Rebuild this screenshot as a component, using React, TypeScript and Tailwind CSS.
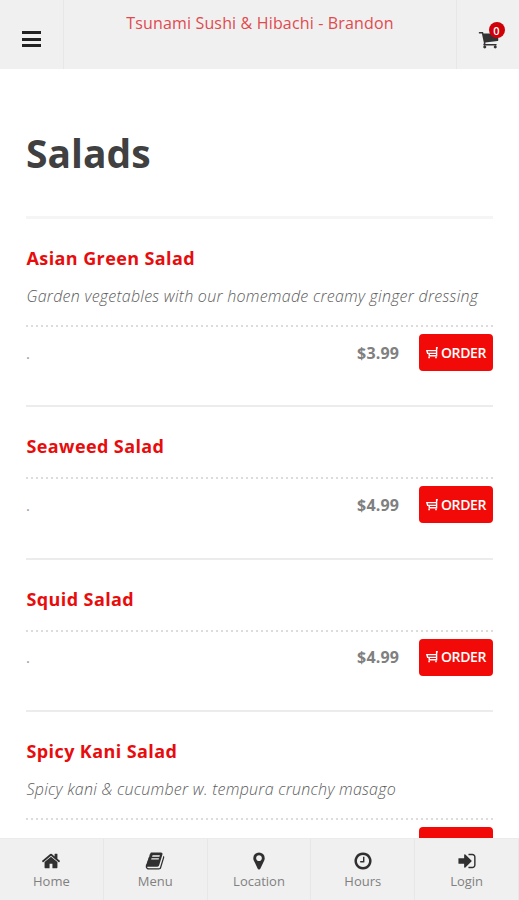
import React from "react";

const paths = {
  home: "M1472 992v480q0 26-19 45t-45 19h-384v-384h-256v384h-384q-26 0-45-19t-19-45v-480q0-1 .5-3t.5-3l575-474 575 474q1 2 1 6zm223-69l-62 74q-8 9-21 11h-3q-13 0-21-7l-692-577-692 577q-12 8-24 7-13-2-21-11l-62-74q-8-10-7-23.5t11-21.5l719-599q32-26 76-26t76 26l244 204v-195q0-14 9-23t23-9h192q14 0 23 9t9 23v408l219 182q10 8 11 21.5t-7 23.5z",
  book: "M1703 478q40 57 18 129l-275 906q-19 64-76.5 107.5t-122.5 43.5h-923q-77 0-148.5-53.5t-99.5-131.5q-24-67-2-127 0-4 3-27t4-37q1-8-3-21.5t-3-19.5q2-11 8-21t16.5-23.5 16.5-23.5q23-38 45-91.5t30-91.5q3-10 .5-30t-.5-28q3-11 17-28t17-23q21-36 42-92t25-90q1-9-2.5-32t.5-28q4-13 22-30.5t22-22.5q19-26 42.5-84.5t27.5-96.5q1-8-3-25.5t-2-26.5q2-8 9-18t18-23 17-21q8-12 16.5-30.5t15-35 16-36 19.5-32 26.5-23.5 36-11.5 47.5 5.5l-1 3q38-9 51-9h761q74 0 114 56t18 130l-274 906q-36 119-71.5 153.5t-128.5 34.5h-869q-27 0-38 15-11 16-1 43 24 70 144 70h923q29 0 56-15.5t35-41.5l300-987q7-22 5-57 38 15 59 43zm-1064 2q-4 13 2 22.5t20 9.5h608q13 0 25.5-9.5t16.5-22.5l21-64q4-13-2-22.5t-20-9.5h-608q-13 0-25.5 9.5t-16.5 22.5zm-83 256q-4 13 2 22.5t20 9.5h608q13 0 25.5-9.5t16.5-22.5l21-64q4-13-2-22.5t-20-9.5h-608q-13 0-25.5 9.5t-16.5 22.5z",
  marker: "M1152 640q0-106-75-181t-181-75-181 75-75 181 75 181 181 75 181-75 75-181zm256 0q0 109-33 179l-364 774q-16 33-47.5 52t-67.5 19-67.5-19-46.5-52l-365-774q-33-70-33-179 0-212 150-362t362-150 362 150 150 362z",
  clock: "M1024 544v448q0 14-9 23t-23 9h-320q-14 0-23-9t-9-23v-64q0-14 9-23t23-9h224v-352q0-14 9-23t23-9h64q14 0 23 9t9 23zm416 352q0-148-73-273t-198-198-273-73-273 73-198 198-73 273 73 273 198 198 273 73 273-73 198-198 73-273zm224 0q0 209-103 385.5t-279.5 279.5-385.5 103-385.5-103-279.5-279.5-103-385.5 103-385.5 279.5-279.5 385.5-103 385.5 103 279.5 279.5 103 385.5z",
  signIn: "M1312 896q0 26-19 45l-544 544q-19 19-45 19t-45-19-19-45v-288h-448q-26 0-45-19t-19-45v-384q0-26 19-45t45-19h448v-288q0-26 19-45t45-19 45 19l544 544q19 19 19 45zm352-352v704q0 119-84.5 203.5t-203.5 84.5h-320q-13 0-22.5-9.5t-9.5-22.5q0-4-1-20t-.5-26.5 3-23.5 10-19.5 20.5-6.5h320q66 0 113-47t47-113v-704q0-66-47-113t-113-47h-312l-11.5-1-11.5-3-8-5.5-7-9-2-13.5q0-4-1-20t-.5-26.5 3-23.5 10-19.5 20.5-6.5h320q119 0 203.5 84.5t84.5 203.5z",
  cart: "M704 1536q0 52-38 90t-90 38-90-38-38-90 38-90 90-38 90 38 38 90zm896 0q0 52-38 90t-90 38-90-38-38-90 38-90 90-38 90 38 38 90zm128-1088v512q0 24-16.5 42.5t-40.5 21.5l-1044 122q13 60 13 70 0 16-24 64h920q26 0 45 19t19 45-19 45-45 19h-1024q-26 0-45-19t-19-45q0-11 8-31.5t16-36 21.5-40 15.5-29.5l-177-823h-204q-26 0-45-19t-19-45 19-45 45-19h256q16 0 28.5 6.5t19.5 15.5 13 24.5 8 26 5.5 29.5 4.5 26h1201q26 0 45 19t19 45z",
};

type IconName = keyof typeof paths;

function Icon({ name, className }: { name: IconName; className: string }) {
  return (
    <svg viewBox="0 0 1792 1792" fill="currentColor" className={className} aria-hidden="true">
      <path d={paths[name]} />
    </svg>
  );
}

function OrderButton() {
  return (
    <button className="flex h-[37px] w-[74px] items-center justify-center gap-[3px] rounded-[4px] bg-[#f20a08] text-white">
      <svg viewBox="0 0 12 12" className="size-[12px] shrink-0" fill="none" stroke="currentColor" strokeWidth="1.4" aria-hidden="true">
        <path d="M11.8 .8h-1.2v8H2.8M10.5 3.6H.9L1.6 6.4h8.8M3.2 6.4v2.4" />
        <path d="M2.3 10.4h1.6M9.2 10.4h1.6" strokeWidth="1.6" />
      </svg>
      <span className="text-[14px] font-semibold leading-5 tracking-[-0.35px]">ORDER</span>
    </button>
  );
}

type Dish = { name: string; description?: string; price: string };

const dishes: Dish[] = [
  { name: "Asian Green Salad", description: "Garden vegetables with our homemade creamy ginger dressing", price: "$3.99" },
  { name: "Seaweed Salad", price: "$4.99" },
  { name: "Squid Salad", price: "$4.99" },
  { name: "Spicy Kani Salad", description: "Spicy kani & cucumber w. tempura crunchy masago", price: "" },
];

function DishRow({ dish }: { dish: Dish }) {
  return (
    <article className="border-b-2 border-[#ececec] pt-[25px] pb-[34.3px]">
      <h2 className="pl-[0.5px] text-[18px] font-bold leading-[28px] tracking-[0.4px] text-[#e80c0c]">{dish.name}</h2>
      {dish.description && (
        <p className="mt-[11px] -mb-px whitespace-nowrap pl-[0.5px] text-[16px] font-light italic leading-[26px] tracking-[0.26px] text-[#5c5c5c]">
          {dish.description}
        </p>
      )}
      <svg className="mt-[17px] block h-[2px] w-full" aria-hidden="true">
        <line x1="0" y1="1" x2="100%" y2="1" stroke="#dcdcdc" strokeWidth="2" strokeDasharray="2 3" />
      </svg>
      <div className="mt-[7px] flex items-center">
        <span className="flex-1 text-[15px] leading-6 text-[#999]">{dish.price && "."}</span>
        <span className="mr-[20px] text-[16px] font-bold leading-6 tracking-[0.15px] text-[#808080]">{dish.price}</span>
        <OrderButton />
      </div>
    </article>
  );
}

const tabs: { label: string; icon: IconName }[] = [
  { label: "Home", icon: "home" },
  { label: "Menu", icon: "book" },
  { label: "Location", icon: "marker" },
  { label: "Hours", icon: "clock" },
  { label: "Login", icon: "signIn" },
];

export default function App() {
  return (
    <div className="flex h-[900px] w-[519px] flex-col overflow-hidden bg-white font-['Open_Sans',sans-serif]">
      <header className="flex h-[69px] shrink-0 bg-[#f0f0f0]">
        <button className="flex w-[64px] items-center justify-center border-r border-[#e7e7e7] pt-[9px]" aria-label="Open menu">
          <span className="flex w-[19px] flex-col gap-[3.5px]">
            <span className="h-[3px] bg-[#222]" />
            <span className="h-[3px] bg-[#222]" />
            <span className="h-[3px] bg-[#222]" />
          </span>
        </button>
        <div className="flex-1 pt-[11px] text-center text-[16px] leading-6 tracking-[0.16px] text-[#e04a4e]">
          Tsunami Sushi &amp; Hibachi - Brandon
        </div>
        <button className="flex w-[63px] items-center justify-center border-l border-[#e7e7e7] pt-[10px]" aria-label="Cart">
          <span className="relative">
            <Icon name="cart" className="size-[21px] text-[#333]" />
            <span className="absolute -top-[7px] left-[11px] flex size-4 items-center justify-center rounded-full bg-[#d00008] text-[11px] font-semibold leading-none text-white">
              0
            </span>
          </span>
        </button>
      </header>

      <main className="min-h-0 flex-1 overflow-hidden pr-[26px] pl-[26px]">
        <h1 className="border-b-[3px] border-[#f5f5f5] pt-[56px] pb-[35px] text-[39px] font-bold leading-[56px] text-[#404040]">
          Salads
        </h1>
        {dishes.map((dish) => (
          <DishRow key={dish.name} dish={dish} />
        ))}
      </main>

      <nav className="grid h-[62px] shrink-0 grid-cols-5 border-t border-[#ebebeb] bg-[#f0f0f0]">
        {tabs.map((tab) => (
          <a key={tab.label} className="flex flex-col items-center border-r border-[#e7e7e7] pt-[12px]">
            <Icon name={tab.icon} className="size-[20px] text-[#303030]" />
            <span className="text-[13px] leading-5 text-[#808080]">{tab.label}</span>
          </a>
        ))}
      </nav>
    </div>
  );
}
